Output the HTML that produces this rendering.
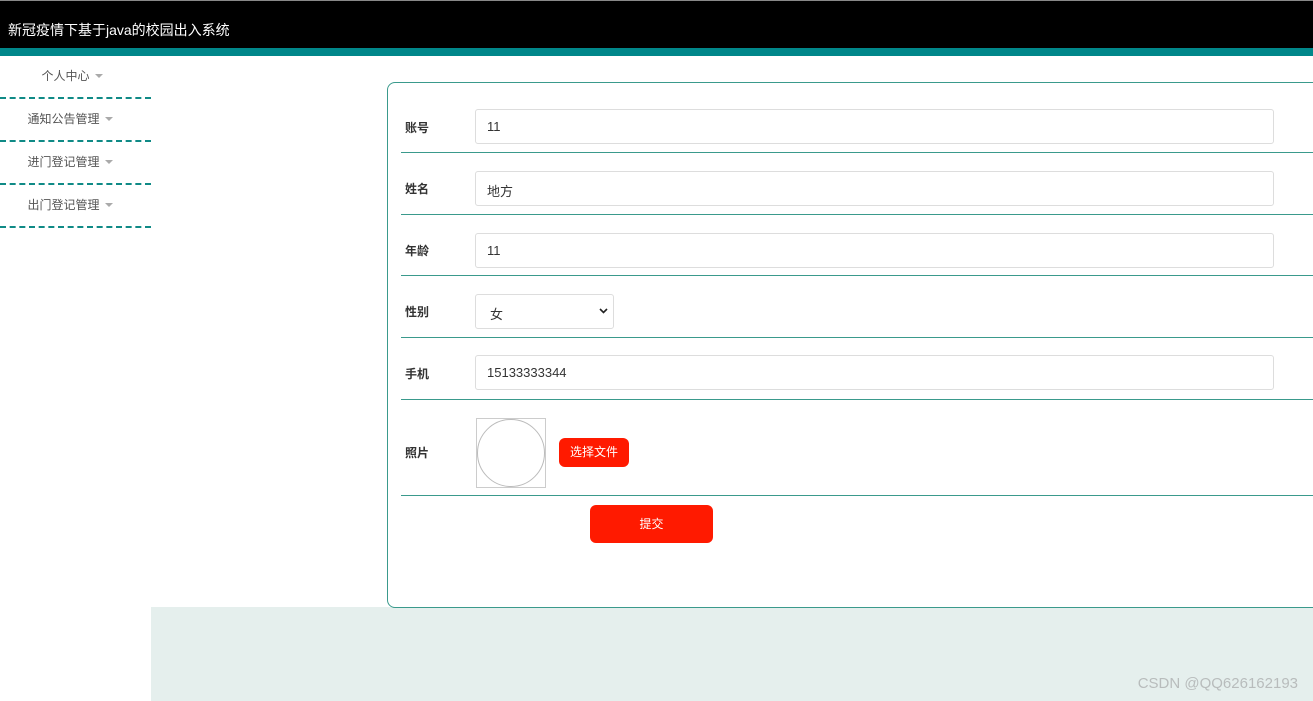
<!DOCTYPE html>
<html><head><meta charset="utf-8"><style>
*{box-sizing:border-box;margin:0;padding:0}
body{width:1313px;height:701px;overflow:hidden;background:#fff;font-family:"Liberation Sans","Noto Sans CJK SC",sans-serif;position:relative}
.top{position:absolute;left:0;top:0;width:1313px;height:48px;background:#000;border-top:1px solid #888}
.top span{position:absolute;left:8px;top:19px;color:#fff;font-size:14px}
.teal{position:absolute;left:0;top:48px;width:1313px;height:8px;background:#00878a}
.menu{position:absolute;left:0;width:151px;height:43px;border-bottom:2px dashed #0f8a86;font-size:12px;color:#555;text-align:center}
.menu span{position:absolute;top:11px;left:0;width:140px}
.menu i{display:inline-block;border:4px solid transparent;border-top-color:#aaa;border-bottom:0;margin-left:5px;vertical-align:2px}
.bottom{position:absolute;left:151px;top:607px;width:1162px;height:94px;background:#e5efed}
.card{position:absolute;left:387px;top:82px;width:940px;height:526px;border:1px solid #3a9a8c;border-radius:8px;background:#fff}
.row{position:absolute;left:401px;width:912px;height:1px;background:#3a9a8c}
.lbl{position:absolute;left:405px;font-size:12px;font-weight:bold;color:#333}
.inp{position:absolute;left:475px;width:799px;height:35px;border:1px solid #ddd;border-radius:3px;font-size:13px;color:#333;padding:9px 11px}
.btn{position:absolute;background:#ff1a00;color:#fff;font-size:12px;text-align:center;border-radius:6px}
.wm{position:absolute;right:15px;top:675px;color:#b8bcbc;font-size:15px}
</style></head><body>
<div class="top"><span>新冠疫情下基于java的校园出入系统</span></div>
<div class="teal"></div>
<div class="menu" style="top:56px"><span style="left:2px">个人中心<i></i></span></div>
<div class="menu" style="top:99px"><span>通知公告管理<i></i></span></div>
<div class="menu" style="top:142px"><span>进门登记管理<i></i></span></div>
<div class="menu" style="top:185px"><span>出门登记管理<i></i></span></div>
<div class="bottom"></div>
<div class="card"></div>
<div class="row" style="top:152px"></div>
<div class="row" style="top:214px"></div>
<div class="row" style="top:275px"></div>
<div class="row" style="top:337px"></div>
<div class="row" style="top:399px"></div>
<div class="row" style="top:495px"></div>
<div class="lbl" style="top:119px">账号</div>
<div class="inp" style="top:109px">11</div>
<div class="lbl" style="top:180px">姓名</div>
<div class="inp" style="top:171px">地方</div>
<div class="lbl" style="top:242px">年龄</div>
<div class="inp" style="top:233px">11</div>
<div class="lbl" style="top:303px">性别</div>
<div class="inp" style="top:294px;width:139px;padding-left:14px">女<svg style="position:absolute;right:5px;top:13px" width="9" height="6" viewBox="0 0 9 6"><path d="M1 1L4.5 4.5L8 1" stroke="#222" stroke-width="1.6" fill="none"/></svg></div>
<div class="lbl" style="top:365px">手机</div>
<div class="inp" style="top:355px">15133333344</div>
<div class="lbl" style="top:444px">照片</div>
<div style="position:absolute;left:476px;top:418px;width:70px;height:70px;border:1px solid #ccc"><div style="width:68px;height:68px;border:1px solid #bbb;border-radius:50%"></div></div>
<div class="btn" style="left:559px;top:438px;width:70px;height:29px;line-height:29px">选择文件</div>
<div class="btn" style="left:590px;top:505px;width:123px;height:38px;line-height:38px">提交</div>
<div class="wm">CSDN @QQ626162193</div>
</body></html>
